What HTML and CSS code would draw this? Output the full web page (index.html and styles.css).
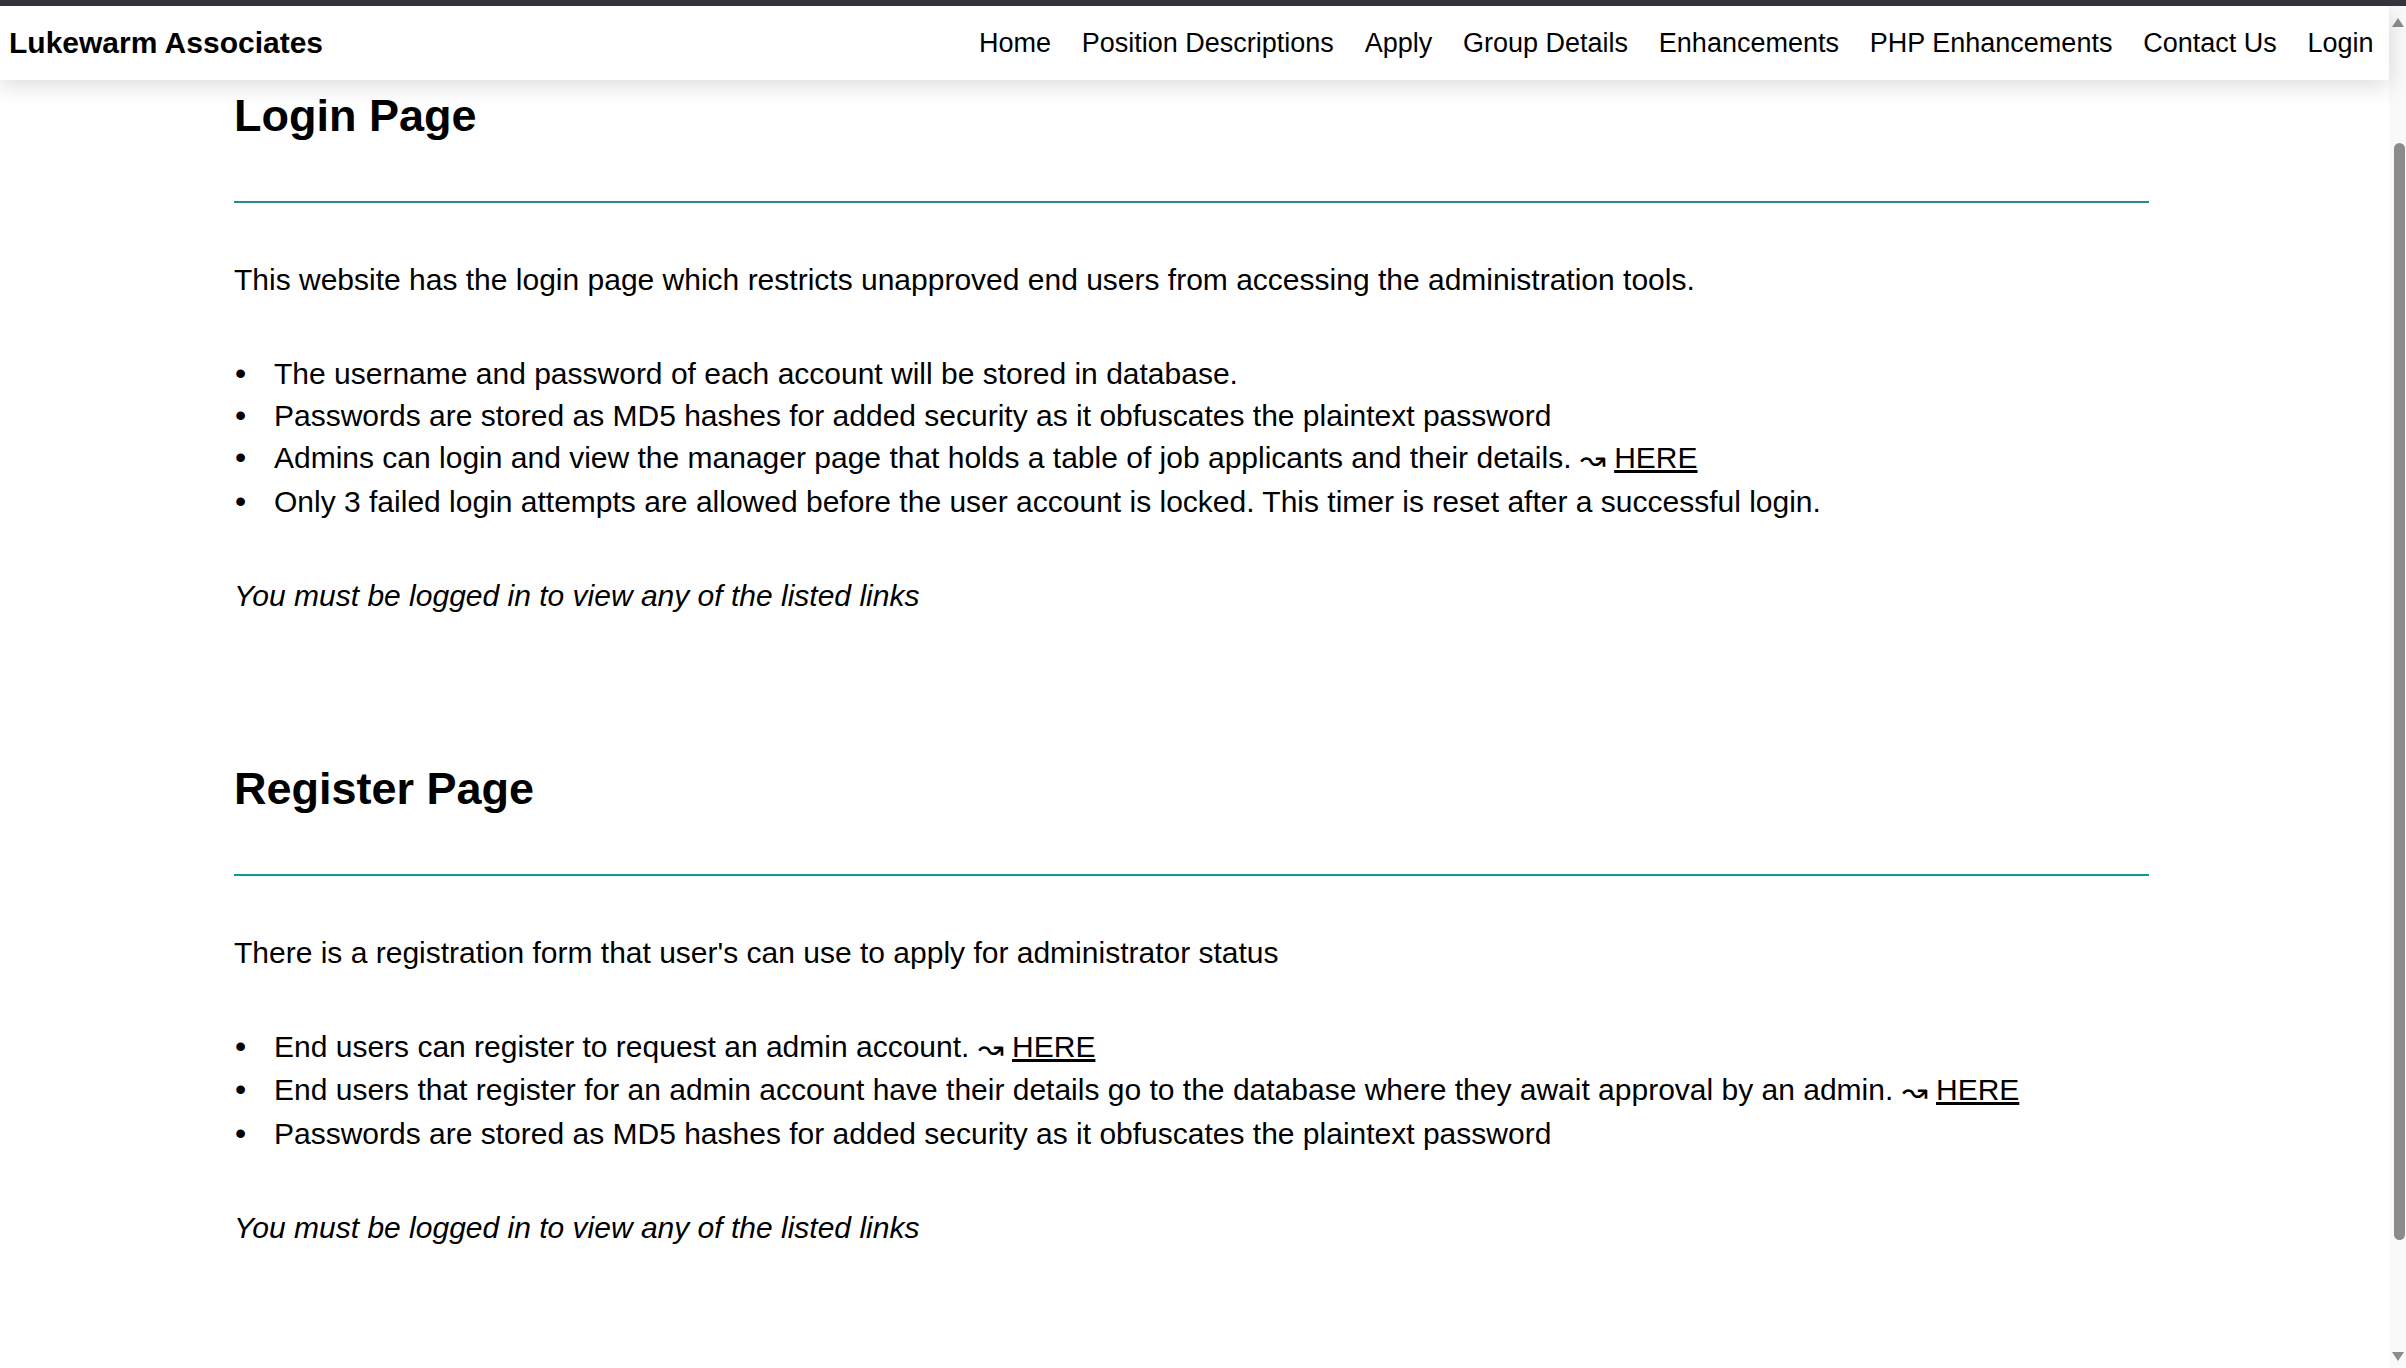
FILE: index.html
```html
<!DOCTYPE html>
<html lang="en">
<head>
<meta charset="utf-8">
<title>Lukewarm Associates - Enhancements</title>
<link rel="stylesheet" href="styles.css">
</head>
<body>
<div class="topstrip"></div>
<div class="frame">
  <div class="page">
    <header class="nav">
      <div class="brand">Lukewarm Associates</div>
      <nav class="links">
        <a href="#">Home</a>
        <a href="#">Position Descriptions</a>
        <a href="#">Apply</a>
        <a href="#">Group Details</a>
        <a href="#">Enhancements</a>
        <a href="#">PHP Enhancements</a>
        <a href="#">Contact Us</a>
        <a href="#">Login</a>
      </nav>
    </header>
    <main class="content">
      <section class="section">
        <h2 class="title">Login Page</h2>
        <hr class="rule rule-dark">
        <p class="lead">This website has the login page which restricts unapproved end users from accessing the administration tools.</p>
        <ul class="points">
          <li>The username and password of each account will be stored in database.</li>
          <li>Passwords are stored as MD5 hashes for added security as it obfuscates the plaintext password</li>
          <li>Admins can login and view the manager page that holds a table of job applicants and their details. <span class="wave">&#8605;</span> <a class="here" href="#">HERE</a></li>
          <li>Only 3 failed login attempts are allowed before the user account is locked. This timer is reset after a successful login.</li>
        </ul>
        <p class="note">You must be logged in to view any of the listed links</p>
      </section>
      <section class="section section-next">
        <h2 class="title">Register Page</h2>
        <hr class="rule rule-bright">
        <p class="lead">There is a registration form that user's can use to apply for administrator status</p>
        <ul class="points">
          <li>End users can register to request an admin account. <span class="wave">&#8605;</span> <a class="here" href="#">HERE</a></li>
          <li>End users that register for an admin account have their details go to the database where they await approval by an admin. <span class="wave">&#8605;</span> <a class="here" href="#">HERE</a></li>
          <li>Passwords are stored as MD5 hashes for added security as it obfuscates the plaintext password</li>
        </ul>
        <p class="note">You must be logged in to view any of the listed links</p>
      </section>
    </main>
  </div>
  <div class="scrollbar">
    <span class="arrow arrow-up"></span>
    <div class="track"><div class="thumb"></div></div>
    <span class="arrow arrow-down"></span>
  </div>
</div>
</body>
</html>
```

FILE: styles.css
```css
html, body {
  margin: 0;
  padding: 0;
  height: 100%;
  overflow: hidden;
  background: #ffffff;
}

body {
  display: flex;
  flex-direction: column;
  font-family: "Liberation Sans", Arial, sans-serif;
  color: #000;
}

.topstrip {
  height: 6px;
  flex: none;
  background: #35363a;
}

.frame {
  flex: 1;
  display: flex;
  min-height: 0;
}

.page {
  flex: 1;
  min-width: 0;
  display: flex;
  flex-direction: column;
  background: #fff;
}

.nav {
  position: relative;
  z-index: 2;
  height: 74px;
  flex: none;
  display: flex;
  align-items: center;
  justify-content: space-between;
  padding: 0 0 0 9px;
  background: #fff;
  box-shadow: 0 6px 22px rgba(0, 0, 0, 0.14);
}

.brand {
  font-size: 30px;
  font-weight: bold;
}

.links {
  display: flex;
  align-items: center;
}

.links a {
  font-size: 27px;
  color: #000;
  text-decoration: none;
  padding: 0 15.4px;
}

.content {
  padding: 0 240px 0 234px;
  font-size: 30px;
  line-height: 1.4;
}

.title {
  font-size: 45px;
  font-weight: bold;
  line-height: 1.4;
  margin: 4px 0 0;
}

.section-next {
  margin-top: 140px;
}

.rule {
  border: 0;
  height: 2px;
  margin: 54px 0 56px;
}

.rule-dark {
  background: #2a8888;
}

.rule-bright {
  background: #0a9a9a;
}

.lead {
  margin: 0 0 52px;
}

.points {
  margin: 0 0 52px;
  padding-left: 40px;
  list-style: none;
}

.points li::before {
  content: "\2022";
  display: inline-block;
  width: 39px;
  margin-left: -39px;
  font-size: 32px;
  line-height: 1;
}

.note {
  margin: 0;
  font-style: italic;
}

.wave {
  display: inline-block;
  font-family: "DejaVu Sans", sans-serif;
  font-size: 31px;
  line-height: 30px;
  vertical-align: -2px;
  padding-bottom: 6.5px;
}

.here {
  color: #000;
  text-decoration: underline;
}

.scrollbar {
  width: 17px;
  flex: none;
  display: flex;
  flex-direction: column;
  align-items: center;
  background: #f9f9f9;
}

.arrow {
  width: 0;
  height: 0;
  border-left: 6px solid transparent;
  border-right: 6px solid transparent;
  flex: none;
}

.arrow-up {
  margin-top: 12px;
  border-bottom: 9px solid #8c8c8c;
}

.arrow-down {
  margin-bottom: 7px;
  border-top: 9px solid #8c8c8c;
}

.track {
  flex: 1;
  width: 100%;
  display: flex;
  justify-content: flex-end;
}

.thumb {
  width: 11px;
  height: 1097px;
  margin-top: 116px;
  margin-right: 1px;
  border-radius: 6px;
  background: #8b8b8b;
}
```
